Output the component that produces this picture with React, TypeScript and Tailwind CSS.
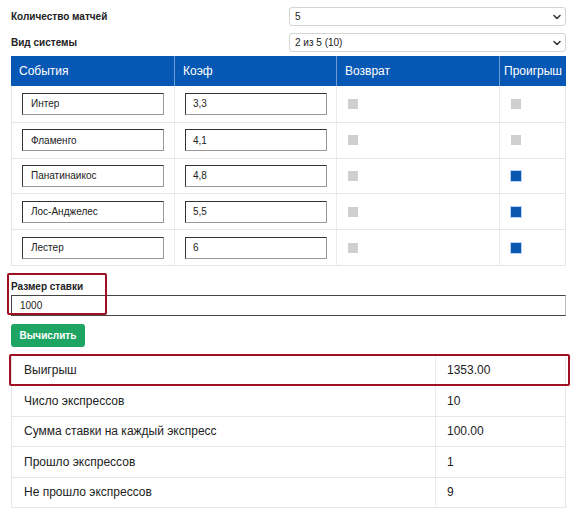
import React from "react";

const events = [
  { name: "Интер", coef: "3,3", lose: false },
  { name: "Фламенго", coef: "4,1", lose: false },
  { name: "Панатинаикос", coef: "4,8", lose: true },
  { name: "Лос-Анджелес", coef: "5,5", lose: true },
  { name: "Лестер", coef: "6", lose: true },
];

const results = [
  { label: "Выигрыш", value: "1353.00" },
  { label: "Число экспрессов", value: "10" },
  { label: "Сумма ставки на каждый экспресс", value: "100.00" },
  { label: "Прошло экспрессов", value: "1" },
  { label: "Не прошло экспрессов", value: "9" },
];

function Chevron() {
  return (
    <svg width="8" height="8" viewBox="0 0 16 16" className="text-[#333]">
      <path d="M2 5l6 6 6-6" fill="none" stroke="currentColor" strokeWidth="3" strokeLinecap="round" strokeLinejoin="round" />
    </svg>
  );
}

function FakeSelect({ value }: { value: string }) {
  return (
    <div className="flex h-[19px] flex-1 items-center justify-between rounded-[3px] border border-[#d4d4d4] bg-white pl-[5px] pr-[4px] text-[10px] text-[#222]">
      <span>{value}</span>
      <Chevron />
    </div>
  );
}

function Box({ checked }: { checked: boolean }) {
  return checked ? (
    <div className="h-[10px] w-[10px] bg-[#0b57b0] shadow-[0_0_0_1px_#b8d4f5]" />
  ) : (
    <div className="h-[10px] w-[10px] bg-[#cfcfcf]" />
  );
}

export default function App() {
  return (
    <div className="w-[579px] bg-white pl-[11px] pr-[13px] pt-[7px] font-['Liberation_Sans',Arial,sans-serif] text-[#222]">
      <div className="flex items-center">
        <div className="w-[278px] text-[10px] font-bold">Количество матчей</div>
        <FakeSelect value="5" />
      </div>
      <div className="mt-[7px] flex items-center">
        <div className="w-[278px] text-[10px] font-bold">Вид системы</div>
        <FakeSelect value="2 из 5 (10)" />
      </div>

      <div className="mt-[4px] border-b border-[#e6e6e6]">
        <div className="flex h-[30px] bg-[#0757b5] text-[12px] text-white">
          <div className="flex w-[164px] items-center border-r border-[#6f9bd6] pl-[8px]">События</div>
          <div className="flex w-[162px] items-center border-r border-[#6f9bd6] pl-[8px]">Коэф</div>
          <div className="flex w-[163px] items-center border-r border-[#6f9bd6] pl-[8px]">Возврат</div>
          <div className="flex flex-1 items-center pl-[4px]">Проигрыш</div>
        </div>
        {events.map((e, i) => (
          <div key={e.name} className={`flex h-[35.8px] border-l border-r border-[#e6e6e6] ${i > 0 ? "border-t" : ""}`}>
            <div className="flex w-[163px] items-center border-r border-[#ececec] pl-[10px]">
              <div className="flex h-[22px] w-[142px] items-center border border-[#333] border-b-[#999] border-r-[#999] pl-[8px] text-[10px]">
                {e.name}
              </div>
            </div>
            <div className="flex w-[162px] items-center border-r border-[#ececec] pl-[10px]">
              <div className="flex h-[22px] w-[142px] items-center border border-[#333] border-b-[#999] border-r-[#999] pl-[7px] text-[10px]">
                {e.coef}
              </div>
            </div>
            <div className="flex w-[163px] items-center border-r border-[#ececec] pl-[11px]">
              <Box checked={false} />
            </div>
            <div className="flex flex-1 items-center pl-[11px]">
              <Box checked={e.lose} />
            </div>
          </div>
        ))}
      </div>

      <div className="relative mt-[13px]">
        <div className="text-[10px] font-bold">Размер ставки</div>
        <div className="mt-[1px] flex h-[21px] items-center border border-[#444] border-r-[#bbb] pl-[8px] text-[10px]">1000</div>
        <div className="absolute left-[-4px] top-[-6px] h-[42px] w-[100px] rounded-[2px] border-[2px] border-[#a01020]" />
      </div>

      <button className="mt-[8px] flex h-[23px] w-[74px] items-center justify-center rounded-[3px] bg-[#1ea463] text-[10px] font-bold text-white">
        Вычислить
      </button>

      <div className="relative mt-[8px] border-b border-[#e6e6e6] text-[12px]">
        {results.map((r, i) => (
          <div key={r.label} className={`flex h-[30.4px] border-l border-r border-[#e6e6e6] ${i > 0 ? "border-t" : ""}`}>
            <div className="flex w-[424px] items-center border-r border-[#ececec] pl-[12px]">{r.label}</div>
            <div className="flex flex-1 items-center pl-[11px]">{r.value}</div>
          </div>
        ))}
        <div className="absolute left-[-2px] top-[-1px] h-[32px] w-[561px] rounded-[2px] border-[2px] border-[#a01020]" />
      </div>
    </div>
  );
}
